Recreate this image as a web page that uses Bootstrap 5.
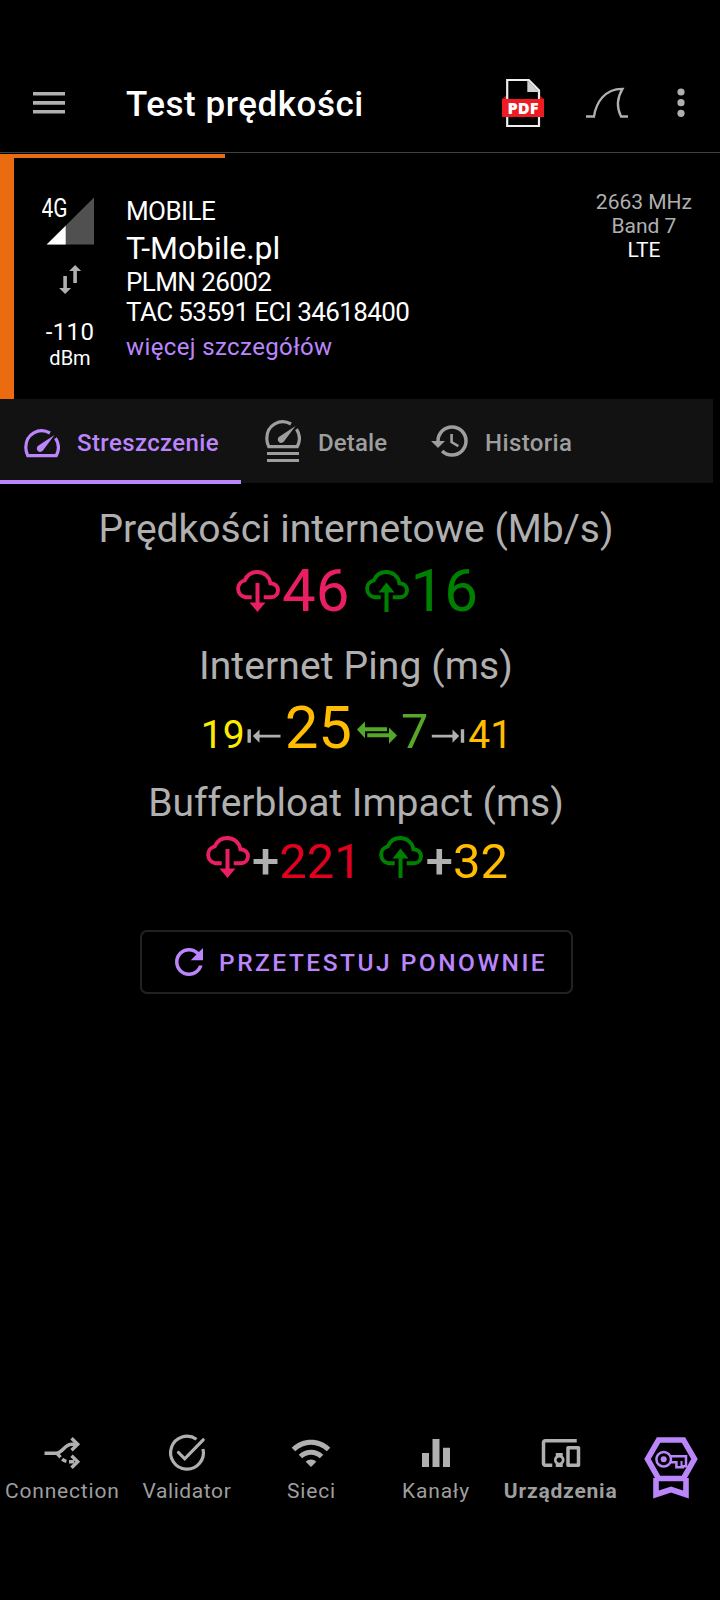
<!DOCTYPE html>
<html lang="pl" data-bs-theme="dark">
<head>
<meta charset="utf-8">
<meta name="viewport" content="width=device-width, initial-scale=1">
<title>Test prędkości</title>
<link href="https://cdn.jsdelivr.net/npm/bootstrap@5.3.0/dist/css/bootstrap.min.css" rel="stylesheet">
<style>
:root{--accent:#bb86fc;--soft:#b0b0b0;--orange:#eb6c10}
body{background:#000;color:#fff;font-family:Roboto,"Noto Sans",sans-serif;height:1600px;overflow:hidden}
svg{display:block;flex:none}
.soft{color:var(--soft)}
.appbar{height:153px;padding:54px 0 0 33px;border-bottom:1px solid #424242}
.appbar h1{font-size:35px;font-weight:500;line-height:94px;margin:0 0 0 61px;padding-top:4px;letter-spacing:.53px}
.panel{height:245px;margin-top:1px;border-left:14px solid var(--orange)}
.load-bar{height:4px;width:211px;background:var(--orange)}
.signal{width:112px;padding-top:36px}
.signal .level{font-size:24px;line-height:32px;margin-top:20px;letter-spacing:.4px}
.signal .unit{font-size:20px;line-height:20px}
.facts{padding-top:36px;white-space:nowrap}
.facts div{font-size:26px;letter-spacing:-.59px}
.facts .operator{font-size:32px;line-height:39px;letter-spacing:-.1px}
.facts .more{font-size:24px;line-height:38px;letter-spacing:.38px;color:var(--accent)}
.radio-info{margin-right:28px;padding-top:32px;font-size:21px;line-height:24px}
.tabs{width:713px;height:84px;background:#121212}
.tabs .nav-link{border:0;border-radius:0;border-bottom:4px solid transparent;padding:3px 22px 0 24px;font-size:24px;font-weight:500;letter-spacing:.38px;color:#9e9e9e}
.tabs .nav-link span{padding-top:3px}
.tabs .nav-link.active{color:var(--accent);border-color:var(--accent);background:none}
.results{width:713px;padding-top:18px}
.results h2{font-size:39px;font-weight:400;line-height:56px;margin:0 1px 0 0;color:var(--soft)}
.figures{height:68px;line-height:68px;font-size:60px;margin-bottom:13px}
.figures svg{align-self:flex-start}
.figures.bloat{height:61px;line-height:61px;font-size:49px;margin:0}
.retest{width:433px;height:64px;margin-top:38px;border:2px solid #222;border-radius:7px;color:var(--accent);font-size:24.5px;font-weight:500;letter-spacing:2.5px;padding:0 0 0 26px;white-space:nowrap}
.retest span{padding-top:3px;margin-left:9px}
.bottom{height:176px;color:#9e9e9e;font-size:21px;line-height:24px;letter-spacing:.8px}
.bottom .entry{width:124.6px;padding-top:8px}
.bottom .entry span{margin-top:5px}
</style>
</head>
<body class="d-flex flex-column">
<header class="appbar d-flex align-items-center">
  <svg width="32" height="22" viewBox="0 0 32 22" fill="#b0b0b0"><path d="M0 0h32v3.600H0zM0 9.100h32v3.600H0zM0 18h32v3.600H0z"/></svg>
  <h1>Test prędkości</h1>
  <div class="d-flex align-items-center ms-auto">
    <svg width="42" height="50" viewBox="502 78 42 50"><path d="M507.200 80h21.600l10.200 10.500V126h-31.800z" fill="none" stroke="#eee" stroke-width="2.200"/><path d="M527.300 80l12 12h-12z" fill="#d0d0d0"/><path d="M502 99l4-3.500V99zM544 99l-4-3.500V99z" fill="#b01016"/><path d="M502 99h42v18h-42z" fill="#ed1c24"/><text x="523" y="114.300" text-anchor="middle" textLength="31" lengthAdjust="spacingAndGlyphs" font-family="Open Sans" font-weight="800" font-size="16.200" fill="#fff">PDF</text></svg>
    <svg width="42" height="32" viewBox="586 87 42 32" style="margin-left:42px" fill="none" stroke="#b0b0b0" stroke-width="2.300"><path d="M586 116.500h8c2-14 11-28 28.500-27.700c-5.500 9-6 18.500-1.500 27.700h7"/></svg>
    <svg width="8" height="30" viewBox="0 0 8 30" style="margin:0 35px 0 49px" fill="#b0b0b0"><circle cx="4" cy="4" r="3.600"/><circle cx="4" cy="14.700" r="3.600"/><circle cx="4" cy="25.300" r="3.600"/></svg>
  </div>
</header>

<section class="panel">
  <div class="load-bar"></div>
  <div class="d-flex">
    <div class="signal d-flex flex-column align-items-center">
      <svg width="56" height="102" viewBox="42 194 56 102"><path d="M94 197.500V244.500H46.700z" fill="#505050"/><path d="M65.700 225.700V244.500H46.700z" fill="#fff"/><text x="41.500" y="216.700" font-size="25" textLength="26" lengthAdjust="spacingAndGlyphs" fill="#fff">4G</text><path d="M63.300 276h3.600v12h4.200l-6 6-6-6h4.200zM73.300 283h3.600v-12h4.200l-6-6-6 6h4.200z" fill="#b0b0b0"/></svg>
      <div class="level">-110</div>
      <div class="unit">dBm</div>
    </div>
    <div class="facts">
      <div style="line-height:35px">MOBILE</div>
      <div class="operator">T-Mobile.pl</div>
      <div style="line-height:28px">PLMN 26002</div>
      <div style="line-height:32px">TAC 53591 ECI 34618400</div>
      <div class="more">więcej szczegółów</div>
    </div>
    <div class="radio-info text-center soft ms-auto"><div>2663 MHz</div><div>Band 7</div><div class="text-white">LTE</div></div>
  </div>
</section>

<nav class="tabs nav nav-tabs border-0 flex-nowrap">
  <a class="nav-link active d-flex align-items-center" style="width:241px"><svg width="36" height="30" viewBox="0 0 36 30" style="margin-top:6px" fill="none" stroke="currentColor" stroke-width="3.200"><path d="M26 4C15 -2 1.800 5 1.800 18.500c0 3 .6 5.500 2 8.200h28.400c3.200-6 2.600-12.500-.7-17.500"/><path d="M30.500 6L19.500 20.800a3.500 3.500 0 1 1-4.600-4.600z" fill="currentColor" stroke="none"/></svg><span style="margin-left:17px">Streszczenie</span></a>
  <a class="nav-link d-flex align-items-center" style="width:166px;letter-spacing:.15px"><svg width="36" height="44" viewBox="0 0 36 44" style="margin-top:1px" fill="none" stroke="currentColor" stroke-width="3.200"><path d="M26 4C15 -2 1.800 5 1.800 18.500c0 3 .6 5.500 2 8.200h28.400c3.200-6 2.600-12.500-.7-17.500"/><path d="M30.500 6L19.500 20.800a3.500 3.500 0 1 1-4.600-4.600z" fill="currentColor" stroke="none"/><path d="M2 33.500h32M2 40.500h32"/></svg><span style="margin-left:17px">Detale</span></a>
  <a class="nav-link d-flex align-items-center"><svg width="38" height="42" viewBox="1 0 21.700 24" fill="currentColor"><path d="M13 3a9 9 0 0 0-9 9H1l3.890 3.890.07.14L9 12H6c0-3.870 3.130-7 7-7s7 3.130 7 7-3.130 7-7 7c-1.930 0-3.680-.79-4.940-2.060l-1.420 1.420A8.954 8.954 0 0 0 13 21a9 9 0 0 0 0-18zm-1 5v5l4.280 2.540.72-1.210-3.500-2.080V8H12z"/></svg><span style="margin-left:16px">Historia</span></a>
</nav>

<svg width="0" height="0" class="d-none">
  <symbol id="cloud" viewBox="0 0 45 42"><path d="M16.700 27.200H10.500A8.600 8.600 0 0 1 9.800 10.300C12.200 5 16.800 2 22.300 2C29 2 34.400 6.600 35.400 13.200C39.800 13.200 43 16.300 43 20.200C43 24.200 40 27.200 36 27.200H28.700" fill="none" stroke="currentColor" stroke-width="3.900"/></symbol>
  <symbol id="down" viewBox="0 0 45 42"><use href="#cloud"/><path d="M20.500 13h4v19.500h6L22.500 42l-8-9.500h6z" fill="currentColor"/></symbol>
  <symbol id="up" viewBox="0 0 45 42"><use href="#cloud"/><path d="M20.500 42h4V22.500h6L22.500 12.500l-8 10h6z" fill="currentColor"/></symbol>
</svg>

<main class="results text-center">
  <h2>Prędkości internetowe (Mb/s)</h2>
  <div class="figures d-flex justify-content-center align-items-baseline">
    <span class="d-flex" style="color:#e91e63"><svg width="45" height="42" style="margin:13px 2px 0 0"><use href="#down"/></svg><span>46</span></span>
    <span class="d-flex" style="color:#008000;margin-left:14px"><svg width="45" height="42" style="margin:13px 2px 0 0"><use href="#up"/></svg><span>16</span></span>
  </div>
  <h2 style="letter-spacing:.12px">Internet Ping (ms)</h2>
  <div class="figures d-flex justify-content-center align-items-baseline">
    <span style="font-size:39px;color:#ffeb00">19</span>
    <svg width="34" height="68" viewBox="247.500 694 34 68" style="margin:0 4px 0 2px" fill="#b0b0b0"><path d="M248 729.300h3.400v13.400H248zM281 734.700v2.800h-21v5.200l-6.700-6.600 6.700-6.700v5.300z"/></svg>
    <span style="color:#ffbc00">25</span>
    <svg width="40" height="68" viewBox="356.500 694 40 68" style="margin:0 4px 0 5px" fill="#55a82a"><path d="M356.500 729.500l8-8v5.800h22v3.900h-22v7zM396.500 735.500l-8-8v5.800h-21.700v3.900h21.700v6.500z"/></svg>
    <span style="font-size:48.5px;color:#55a82a">7</span>
    <svg width="34" height="68" viewBox="431.500 694 34 68" style="margin:0 3px 0 3px" fill="#b0b0b0"><path d="M461.300 729.300h3.400v13.400h-3.400zM432.300 734.700v2.800h20.700v5.200l6.700-6.600-6.700-6.700v5.300z"/></svg>
    <span style="font-size:39px;color:#ffbc00">41</span>
  </div>
  <h2>Bufferbloat Impact (ms)</h2>
  <div class="figures bloat d-flex justify-content-center">
    <svg width="45" height="42" style="margin:5px 2px 0 0;color:#e91e63"><use href="#down"/></svg><span class="soft" style="font-weight:500">+</span><span style="color:#e2001f">221</span>
    <svg width="45" height="42" style="margin:5px 3px 0 16px;color:#008000"><use href="#up"/></svg><span class="soft" style="font-weight:500">+</span><span style="color:#ffbc00">32</span>
  </div>
  <button class="retest btn d-inline-flex align-items-center"><svg width="42" height="42" viewBox="0 0 24 24" fill="currentColor"><path d="M17.650 6.350C16.200 4.900 14.210 4 12 4c-4.420 0-7.990 3.580-7.990 8s3.570 8 7.990 8c3.730 0 6.840-2.550 7.730-6h-2.080c-.82 2.330-3.040 4-5.650 4-3.310 0-6-2.690-6-6s2.690-6 6-6c1.660 0 3.140.69 4.220 1.780L13 11h7V4l-2.350 2.350z"/></svg><span>PRZETESTUJ PONOWNIE</span></button>
</main>

<nav class="bottom d-flex mt-auto text-center">
  <div class="entry d-flex flex-column align-items-center"><svg width="42" height="42" viewBox="41 1432 42 42" fill="none" stroke="#b0b0b0" stroke-width="3.400"><path d="M44.500 1453.200H56C63 1453.200 64 1444.300 72 1444.300H77"/><path d="M71.500 1438.300l6.200 6-6.200 6M71.500 1455.800l6.200 6-6.200 6"/><path d="M57 1453.800C60 1455 61 1461.800 70 1461.800h7" stroke-dasharray="5 2.500"/></svg><span>Connection</span></div>
  <div class="entry d-flex flex-column align-items-center"><svg width="42" height="42" viewBox="166 1432 42 42" fill="none" stroke="#b0b0b0" stroke-width="3.200"><path d="M196.500 1439.300A16.400 16.400 0 1 0 203 1449"/><path d="M178.500 1452.500l6.200 6.300 18.500-19" stroke-linecap="round"/></svg><span style="letter-spacing:.6px">Validator</span></div>
  <div class="entry d-flex flex-column align-items-center"><svg width="42" height="42" viewBox="0 0 24 24" fill="#b0b0b0"><path d="M1 9l2 2c4.970-4.970 13.030-4.970 18 0l2-2C16.930 2.930 7.080 2.930 1 9zm8 8l3 3 3-3c-1.650-1.660-4.340-1.660-6 0zm-4-4l2 2c2.760-2.760 7.240-2.760 10 0l2-2C15.140 9.140 8.870 9.140 5 13z"/></svg><span>Sieci</span></div>
  <div class="entry d-flex flex-column align-items-center"><svg width="42" height="42" viewBox="0 0 24 24" fill="#b0b0b0"><path d="M10 20h4V4h-4v16zm-6 0h4v-8H4v8zM16 9v11h4V9h-4z"/></svg><span>Kanały</span></div>
  <div class="entry d-flex flex-column align-items-center"><svg width="42" height="42" viewBox="0 0 24 24" fill="#b0b0b0"><path d="M3 6h18V4H3c-1.100 0-2 .9-2 2v12c0 1.100.9 2 2 2h4v-2H3V6zm10 6H9v1.780c-.61.55-1 1.330-1 2.220s.39 1.670 1 2.220V20h4v-1.780c.61-.55 1-1.340 1-2.220s-.39-1.670-1-2.220V12zm-2 5.500c-.83 0-1.500-.67-1.500-1.500s.67-1.500 1.500-1.500 1.500.67 1.500 1.500-.67 1.500-1.500 1.500zM22 8h-6c-.5 0-1 .5-1 1v10c0 .5.5 1 1 1h6c.5 0 1-.5 1-1V9c0-.5-.5-1-1-1zm-1 10h-4v-8h4v8z"/></svg><span class="fw-bold">Urządzenia</span></div>
  <svg width="54" height="62" viewBox="0 0 54 62" style="margin:13px 0 0 21px" fill="none" stroke="#bb86fc"><path d="M14.500 3h25L50.500 22 39.500 41.500h-25L3.500 22z" stroke-width="5.600"/><path d="M12 41v16.500l15-5 15 5V41" stroke-width="5.600"/><circle cx="19.700" cy="22.300" r="7.300" stroke-width="2.500"/><circle cx="19.700" cy="22.300" r="3" fill="#bb86fc" stroke="none"/><path d="M26.500 19.200h15.500v10h-3.300v1h-6.300v-5h-6" stroke-width="2.500"/><path d="M37.500 24v5" stroke-width="2"/></svg>
</nav>
<script src="https://cdn.jsdelivr.net/npm/bootstrap@5.3.0/dist/js/bootstrap.bundle.min.js"></script>
</body>
</html>
